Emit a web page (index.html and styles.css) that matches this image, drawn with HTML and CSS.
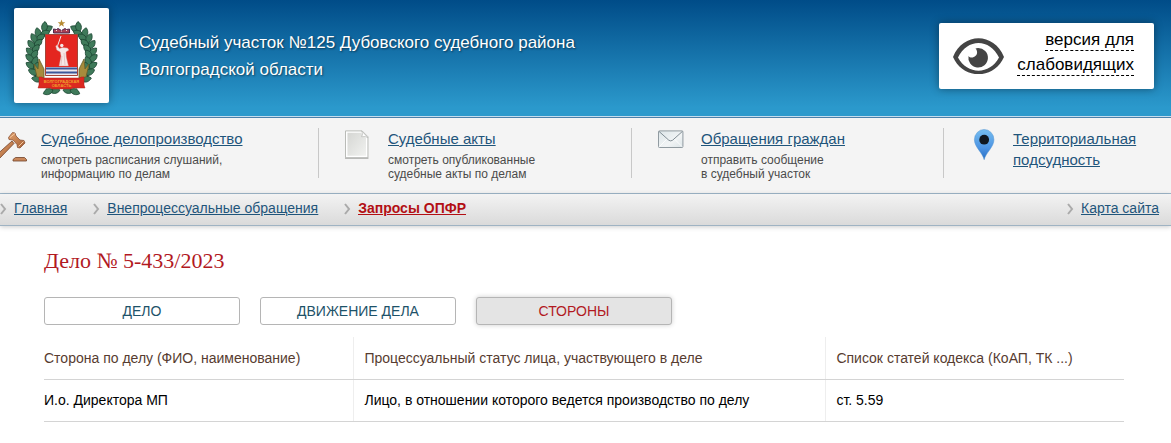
FILE: index.html
```html
<!DOCTYPE html>
<html lang="ru">
<head>
<meta charset="utf-8">
<meta name="viewport" content="width=device-width, initial-scale=1">
<title>Дело № 5-433/2023</title>
<link rel="stylesheet" href="styles.css">
</head>
<body>
<header class="header">
  <a class="logo" href="#" aria-label="Волгоградская область">
    <svg class="emblem" viewBox="0 0 95 95" aria-hidden="true">
      <defs>
        <path id="leaf" d="M0 1C-5-1-5-6-3-9C2-7 3-3 0 1Z"/>
        <g id="branch" fill="#3f7a5a" stroke="#1c4733" stroke-width=".8">
          <path d="M33 80C13 67 11 38 35 18" fill="none" stroke-width="1.500"/>
          <use href="#leaf" transform="translate(30 23) rotate(80)"/>
          <use href="#leaf" transform="translate(30 23) rotate(25)"/>
          <use href="#leaf" transform="translate(27 27) rotate(85)"/>
          <use href="#leaf" transform="translate(25 29) rotate(5)"/>
          <use href="#leaf" transform="translate(23 32) rotate(72)"/>
          <use href="#leaf" transform="translate(22 34) rotate(-10)"/>
          <use href="#leaf" transform="translate(21 38) rotate(65)"/>
          <use href="#leaf" transform="translate(20 40) rotate(-20)"/>
          <use href="#leaf" transform="translate(19 44) rotate(58)"/>
          <use href="#leaf" transform="translate(19 47) rotate(-25)"/>
          <use href="#leaf" transform="translate(18 50) rotate(52)"/>
          <use href="#leaf" transform="translate(19 53) rotate(-30)"/>
          <use href="#leaf" transform="translate(19 57) rotate(45)"/>
          <use href="#leaf" transform="translate(20 60) rotate(-38)"/>
          <use href="#leaf" transform="translate(21 63) rotate(38)"/>
          <use href="#leaf" transform="translate(23 66) rotate(-45)"/>
          <use href="#leaf" transform="translate(25 69) rotate(25)"/>
          <use href="#leaf" transform="translate(27 72) rotate(-60)"/>
          <use href="#leaf" transform="translate(45 82) rotate(-80)"/>
          <use href="#leaf" transform="translate(38 82) rotate(-95)"/>
          <path d="M23 69L20 56L24 61L25 51L30 61L30 70Z" fill="#a68b3c" stroke="#66602a"/>
        </g>
      </defs>
      <use href="#branch"/>
      <use href="#branch" transform="translate(95 0) scale(-1 1)"/>
      <path d="M47.500 11.500l1 2.700h2.800l-2.200 1.700.8 2.800-2.400-1.600-2.400 1.600.8-2.800-2.200-1.700h2.800z" fill="#b58a31"/>
      <path d="M39.500 25v-4l3 .5 1.500-1 3.500 2 3.500-2 1.500 1 3-.5v4z" fill="#a94053" stroke="#4d294f"/>
      <path d="M42 22.500h1M47 23h1M52 22.500h1" stroke="#f3dadd" stroke-width="1.200"/>
      <path d="M31.500 26.500h32v41h-32z" fill="#e42620" stroke="#a34538"/>
      <path d="M32 59h31v8H32z" fill="#eee8ed"/>
      <path d="M32 60.500h31M32 64.500h31" stroke="#3b5799" stroke-width="2"/>
      <path d="M43.500 38L47 28" fill="none" stroke="#f6e7e7"/>
      <path d="M43 37l2.500 3.500 3-1 5 .5 1.500 2-3 2 .3 5 2.200 9h-9.500l2-10-.8-4-3.500-2-1-4z" fill="#f6e7e7" stroke="#c98382" stroke-width=".4"/>
      <circle cx="47.800" cy="37.500" r="1.700" fill="#f6e7e7"/>
      <path d="M50 45l1 12M48 48l-1 9" stroke="#d0a4a4" stroke-width=".5"/>
      <path d="M25 69h3l1 1h37l1-1h3v8l1 3H59l-2 1H38l-2-1H24l1-3z" fill="#dc2820" stroke="#a9251d" stroke-width=".5"/>
      <text x="47.500" y="75" class="emblem-text">ВОЛГОГРАДСКАЯ</text>
      <text x="47.500" y="79" class="emblem-text">ОБЛАСТЬ</text>
    </svg>
  </a>
  <div class="court">Судебный участок №125 Дубовского судебного района<br>Волгоградской области</div>
  <a class="vision" href="#">
    <svg class="eye" viewBox="0 0 51 36" aria-hidden="true">
      <path fill-rule="evenodd" fill="#444" d="M0 19C10-6 41-6 51 19C41 42 10 42 0 19ZM5 19.500C14 37 37 37 46 19.500C37 0 14 0 5 19.500Z"/>
      <path fill="#444" d="M25 10A9.800 9.800 0 1 1 15.500 18C18 21.500 25 18.500 24 13.500Q23.800 11.500 22.500 10.500Z"/>
    </svg>
    <span class="vision-label"><span>версия для</span><br><span>слабовидящих</span></span>
  </a>
</header>

<nav class="services" aria-label="Разделы">
  <div class="service">
    <svg class="service-icon" viewBox="0 0 41 40" aria-hidden="true">
      <defs>
        <linearGradient id="wood" x1="0" y1="0" x2="1" y2="1"><stop offset="0" stop-color="#e3a36f"/><stop offset="1" stop-color="#a35c32"/></linearGradient>
      </defs>
      <path d="M-3 26.500L12 13l2 2.500L-1 31z" fill="url(#wood)" stroke="#74422b" stroke-width=".8"/>
      <path d="M12.500 4.500l2.500.5 1 3 4 4 4 .5 1 2.500-5 5-2.500-.5-.5-3-4-4.500-4-.5-.5-2z" fill="url(#wood)" stroke="#8a5438" stroke-width=".8"/>
      <path d="M10 9.500l5-4M18.500 18.500l5-5" fill="none" stroke="#f3c79f"/>
      <path d="M13 31.500l2.500-2h9l2 2v1.500H13z" fill="#c9875a" stroke="#704128" stroke-width=".8"/>
    </svg>
    <div class="service-body">
      <a class="service-link" href="#">Судебное делопроизводство</a>
      <p class="service-note">смотреть расписания слушаний,<br>информацию по делам</p>
    </div>
  </div>
  <div class="service">
    <svg class="service-icon" viewBox="0 0 44 40" aria-hidden="true">
      <defs><linearGradient id="paper" x1="0" y1="0" x2="1" y2="1"><stop offset="0" stop-color="#d5d6d3"/><stop offset="1" stop-color="#f1f2f0"/></linearGradient></defs>
      <path d="M.5 2.500h17l6 6v21.500H.5z" fill="#fff" stroke="#b7b9b5"/>
      <path d="M2.500 4.500h14l5 5V28h-19z" fill="url(#paper)"/>
      <path d="M17 2.500q2 3 0 6 4-1 6.500 1z" fill="#fff" stroke="#b7b9b5" stroke-width=".7"/>
      <path d="M0 30.500h24" stroke="#a9aba8"/>
    </svg>
    <div class="service-body">
      <a class="service-link" href="#">Судебные акты</a>
      <p class="service-note">смотреть опубликованные<br>судебные акты по делам</p>
    </div>
  </div>
  <div class="service">
    <svg class="service-icon" viewBox="0 0 44 40" aria-hidden="true">
      <defs><linearGradient id="mail" x1="0" y1="0" x2="1" y2="1"><stop offset="0" stop-color="#dce5e8"/><stop offset=".6" stop-color="#f1f4f5"/><stop offset="1" stop-color="#dbe4e7"/></linearGradient></defs>
      <rect x=".5" y="2.500" width="25" height="17" rx="1" fill="url(#mail)" stroke="#8d989e"/>
      <path d="M1 3l10 9q2 1.500 4 0L25 3" fill="none" stroke="#7f8b92"/>
      <path d="M1.500 18.500L9 11M24.500 18.500L17 11" stroke="#fff" stroke-width=".8"/>
    </svg>
    <div class="service-body">
      <a class="service-link" href="#">Обращения граждан</a>
      <p class="service-note">отправить сообщение<br>в судебный участок</p>
    </div>
  </div>
  <div class="service">
    <svg class="service-icon" viewBox="0 0 44 40" aria-hidden="true">
      <defs><linearGradient id="pin" x1="0" y1="0" x2="0" y2="1"><stop offset="0" stop-color="#75bdef"/><stop offset=".6" stop-color="#4d94e3"/><stop offset="1" stop-color="#286fc5"/></linearGradient></defs>
      <path d="M14.500 32C13 25 4.500 19 4.500 11.500a10 10.500 0 0 1 20 0C24.500 19 16 25 14.500 32z" fill="url(#pin)" stroke="#4e91d2" stroke-width=".5"/>
      <circle cx="14.500" cy="11.500" r="5" fill="#10171f"/>
    </svg>
    <div class="service-body">
      <a class="service-link" href="#">Территориальная<br>подсудность</a>
    </div>
  </div>
</nav>

<nav class="crumbs" aria-label="Меню">
  <a class="crumb" href="#"><svg class="chevron" viewBox="0 0 7 12" aria-hidden="true"><path d="M1 1l4 5-4 5"/></svg><span>Главная</span></a>
  <a class="crumb" href="#"><svg class="chevron" viewBox="0 0 7 12" aria-hidden="true"><path d="M1 1l4 5-4 5"/></svg><span>Внепроцессуальные обращения</span></a>
  <a class="crumb crumb-current" href="#"><svg class="chevron" viewBox="0 0 7 12" aria-hidden="true"><path d="M1 1l4 5-4 5"/></svg><span>Запросы ОПФР</span></a>
  <a class="crumb crumb-last" href="#"><svg class="chevron" viewBox="0 0 7 12" aria-hidden="true"><path d="M1 1l4 5-4 5"/></svg><span>Карта сайта</span></a>
</nav>

<main class="content">
  <h1 class="title">Дело № 5-433/2023</h1>
  <div class="tabs">
    <button class="tab" type="button">ДЕЛО</button>
    <button class="tab" type="button">ДВИЖЕНИЕ ДЕЛА</button>
    <button class="tab tab-active" type="button" aria-pressed="true">СТОРОНЫ</button>
  </div>
  <table class="parties">
    <thead>
      <tr><th class="col-party" scope="col">Сторона по делу (ФИО, наименование)</th><th class="col-status" scope="col">Процессуальный статус лица, участвующего в деле</th><th scope="col">Список статей кодекса (КоАП, ТК ...)</th></tr>
    </thead>
    <tbody>
      <tr><td>И.о. Директора МП</td><td>Лицо, в отношении которого ведется производство по делу</td><td>ст. 5.59</td></tr>
    </tbody>
  </table>
</main>
</body>
</html>
```
FILE: styles.css
```css
* { box-sizing: border-box; }

body {
  margin: 0;
  background: #fff;
  color: #000;
  font-family: "Liberation Sans", Arial, sans-serif;
  font-size: 14px;
}

/* Header */
.header {
  display: flex;
  align-items: flex-start;
  padding: 8px 17px 14px 14px;
  border-bottom: 1px solid #4b80aa;
  background: linear-gradient(#004c88, #2b99cc 92%);
  box-shadow: inset 0 -1px #c5dced;
}
.logo {
  flex: none;
  width: 95px;
  height: 95px;
  border-radius: 2px;
  background: #fff;
  box-shadow: 0 0 8px rgba(0, 0, 0, .4);
}
.emblem { display: block; width: 100%; }
.emblem-text {
  fill: #f0a12b;
  font-size: 4px;
  font-weight: bold;
  text-anchor: middle;
}
.court {
  margin: 21px 0 0 30px;
  color: #fff;
  font-size: 17px;
  line-height: 27px;
  text-shadow: 1px 1px 2px rgba(0, 0, 0, .5);
}
.vision {
  display: flex;
  flex: none;
  gap: 13px;
  margin: 15px 0 0 auto;
  padding: 4px 20px 12px 14px;
  border-radius: 2px;
  background: #fff;
  color: #000;
  font-size: 17px;
  line-height: 25px;
  text-align: right;
  text-decoration: none;
  box-shadow: 0 0 8px rgba(0, 0, 0, .4);
}
.eye { width: 51px; height: 36px; margin-top: 11px; }
.vision-label span { padding-bottom: 1px; border-bottom: 1px dashed #000; }

/* Service links */
.services {
  display: grid;
  grid-template-columns: 319fr 313fr 312fr 227fr;
  padding: 10px 0 12px;
  border-bottom: 1px solid #9fb8cb;
  background: #f4f4f4;
}
.service {
  display: flex;
  min-height: 53px;
  padding-left: 26px;
  background: linear-gradient(#c8c8c8, #c8c8c8) right top / 1px 50px no-repeat;
}
.service:first-child { padding-left: 0; }
.service:last-child { background: none; }
.service-icon { flex: none; width: 43px; height: 40px; }
.service:first-child .service-icon { width: 41px; }
.service-link {
  color: #1f557b;
  font-size: 15px;
  line-height: 21px;
}
.service-note {
  margin: 4px 0 0;
  color: #4b4b4b;
  font-size: 12px;
  line-height: 14px;
}

/* Breadcrumbs */
.crumbs {
  display: flex;
  gap: 26px;
  padding: 5px 12px 8px 0;
  border-bottom: 1px solid #9fb3c3;
  background: linear-gradient(#f3f3f3, #dadada);
  box-shadow: 0 1px 5px rgba(0, 0, 0, .2);
}
.crumb {
  display: flex;
  align-items: center;
  gap: 7px;
  color: #1f557b;
  line-height: 18px;
}
.crumb span { text-decoration: underline; }
.crumb-current { color: #b30f14; font-weight: bold; }
.crumb-last { margin-left: auto; }
.chevron { width: 7px; height: 12px; margin-top: 2px; }
.chevron path { fill: none; stroke: #aaa; stroke-width: 2; }

/* Case */
.content { padding: 23px 47px 20px 44px; }
.title {
  margin: 0 0 24px;
  color: #b2191f;
  font-family: Georgia, "Liberation Serif", serif;
  font-size: 22px;
  font-weight: normal;
  line-height: 24px;
}
.tabs { display: flex; gap: 20px; }
.tab {
  width: 196px;
  height: 28px;
  padding: 0;
  border: 1px solid #b5b5b5;
  border-radius: 3px;
  background: #fff;
  color: #1d5269;
  font: inherit;
}
.tab-active {
  background: #e4e4e4;
  color: #b2191f;
  box-shadow: 0 0 5px rgba(0, 0, 0, .2);
}
.parties {
  width: 100%;
  margin-top: 12px;
  border-collapse: collapse;
  table-layout: fixed;
  text-align: left;
}
.parties th,
.parties td {
  height: 42px;
  padding: 0 10px;
  border-bottom: 1px solid #d4d4d4;
  border-left: 1px solid #eee;
}
.parties th { color: #573c30; font-weight: normal; }
.parties th:first-child,
.parties td:first-child { padding-left: 0; border-left: 0; }
.col-party { width: 28.7%; }
.col-status { width: 43.7%; }
```
